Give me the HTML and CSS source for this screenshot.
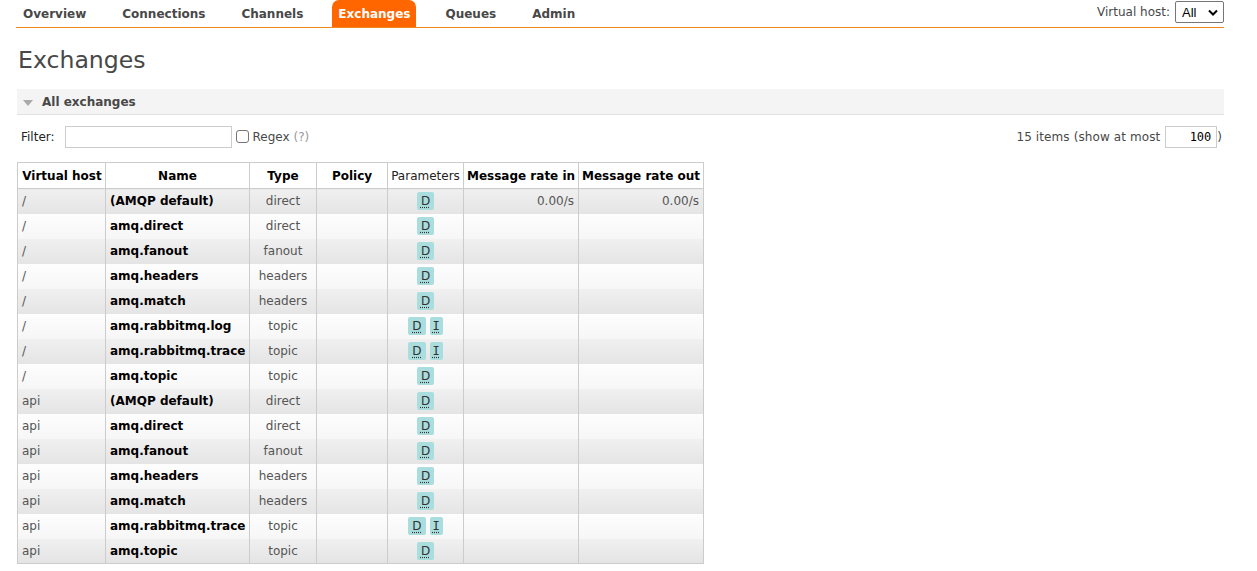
FILE: index.html
```html
<!DOCTYPE html>
<html>
<head>
<meta charset="utf-8">
<link rel="stylesheet" href="styles.css">
</head>
<body>
<div class="menu">
  <ul class="tabs">
    <li><a>Overview</a></li>
    <li><a>Connections</a></li>
    <li><a>Channels</a></li>
    <li><a class="selected">Exchanges</a></li>
    <li><a>Queues</a></li>
    <li><a>Admin</a></li>
  </ul>
  <div class="vhost">Virtual host: <span class="select">All <svg width="10" height="7" viewBox="0 0 10 7"><path d="M1 1.5 L5 5.5 L9 1.5" fill="none" stroke="#000" stroke-width="2"/></svg></span></div>
</div>
<div class="main">
  <h1>Exchanges</h1>
  <div class="section">
    <div class="section-head"><span class="tri"></span>All exchanges</div>
    <div class="filter-row">
      <div class="filter-left">
        <span>Filter:</span>
        <span class="input wide"></span>
        <span class="checkbox"></span>
        <span>Regex <span class="help">(?)</span></span>
      </div>
      <div class="filter-right">
        <span>15 items (show at most</span>
        <span class="input num">100</span><span>)</span>
      </div>
    </div>
    <table class="list">
      <thead>
        <tr><th>Virtual host</th><th>Name</th><th>Type</th><th>Policy</th><th class="plain">Parameters</th><th>Message rate in</th><th>Message rate out</th></tr>
      </thead>
      <tbody>
        <tr class="alt1"><td>/</td><td class="name">(AMQP default)</td><td class="c">direct</td><td></td><td class="c"><abbr>D</abbr></td><td class="r">0.00/s</td><td class="r">0.00/s</td></tr>
        <tr class="alt2"><td>/</td><td class="name">amq.direct</td><td class="c">direct</td><td></td><td class="c"><abbr>D</abbr></td><td></td><td></td></tr>
        <tr class="alt1"><td>/</td><td class="name">amq.fanout</td><td class="c">fanout</td><td></td><td class="c"><abbr>D</abbr></td><td></td><td></td></tr>
        <tr class="alt2"><td>/</td><td class="name">amq.headers</td><td class="c">headers</td><td></td><td class="c"><abbr>D</abbr></td><td></td><td></td></tr>
        <tr class="alt1"><td>/</td><td class="name">amq.match</td><td class="c">headers</td><td></td><td class="c"><abbr>D</abbr></td><td></td><td></td></tr>
        <tr class="alt2"><td>/</td><td class="name">amq.rabbitmq.log</td><td class="c">topic</td><td></td><td class="c"><abbr>D</abbr><abbr class="i">I</abbr></td><td></td><td></td></tr>
        <tr class="alt1"><td>/</td><td class="name">amq.rabbitmq.trace</td><td class="c">topic</td><td></td><td class="c"><abbr>D</abbr><abbr class="i">I</abbr></td><td></td><td></td></tr>
        <tr class="alt2"><td>/</td><td class="name">amq.topic</td><td class="c">topic</td><td></td><td class="c"><abbr>D</abbr></td><td></td><td></td></tr>
        <tr class="alt1"><td>api</td><td class="name">(AMQP default)</td><td class="c">direct</td><td></td><td class="c"><abbr>D</abbr></td><td></td><td></td></tr>
        <tr class="alt2"><td>api</td><td class="name">amq.direct</td><td class="c">direct</td><td></td><td class="c"><abbr>D</abbr></td><td></td><td></td></tr>
        <tr class="alt1"><td>api</td><td class="name">amq.fanout</td><td class="c">fanout</td><td></td><td class="c"><abbr>D</abbr></td><td></td><td></td></tr>
        <tr class="alt2"><td>api</td><td class="name">amq.headers</td><td class="c">headers</td><td></td><td class="c"><abbr>D</abbr></td><td></td><td></td></tr>
        <tr class="alt1"><td>api</td><td class="name">amq.match</td><td class="c">headers</td><td></td><td class="c"><abbr>D</abbr></td><td></td><td></td></tr>
        <tr class="alt2"><td>api</td><td class="name">amq.rabbitmq.trace</td><td class="c">topic</td><td></td><td class="c"><abbr>D</abbr><abbr class="i">I</abbr></td><td></td><td></td></tr>
        <tr class="alt1"><td>api</td><td class="name">amq.topic</td><td class="c">topic</td><td></td><td class="c"><abbr>D</abbr></td><td></td><td></td></tr>
      </tbody>
    </table>
  </div>
</div>
</body>
</html>
```

FILE: styles.css
```css
html, body {
  margin: 0;
  padding: 0;
  background: #fff;
}
body {
  font-family: "DejaVu Sans", Verdana, sans-serif;
  font-size: 12px;
  color: #484848;
}
.menu {
  display: flex;
  justify-content: space-between;
  align-items: center;
  margin: 0 33px 0 16px;
  border-bottom: 1px solid #f0881d;
  height: 27px;
}
.tabs {
  display: flex;
  list-style: none;
  margin: 0;
  padding: 0;
  gap: 22px;
  align-self: stretch;
}
.tabs li a {
  display: flex;
  align-items: center;
  height: 27px;
  padding: 0 7px;
  font-weight: bold;
  font-size: 12px;
  color: #484848;
  box-sizing: border-box;
}
.tabs li a.selected {
  background: #ff6600;
  color: #fff;
  border-radius: 7px 7px 0 0;
  padding: 0 6px;
}
.vhost {
  display: flex;
  align-items: center;
  gap: 5px;
  font-size: 12px;
  color: #484848;
  margin-bottom: 3px;
}
.select {
  display: inline-flex;
  align-items: center;
  justify-content: space-between;
  width: 36px;
  height: 20px;
  padding: 0 5px 0 6px;
  border: 1px solid #767676;
  border-radius: 2px;
  color: #000;
  font-family: "Liberation Sans", Arial, sans-serif;
  font-size: 13px;
}
.main {
  margin: 0 33px 0 17px;
}
h1 {
  font-size: 23.6px;
  font-weight: normal;
  margin: 18px 0 0 1px;
  height: 43px;
  line-height: 28px;
  color: #484848;
}
.section-head {
  display: flex;
  align-items: center;
  height: 24px;
  padding-top: 1px;
  background: #f4f4f4;
  border-bottom: 1px solid #e2e2e2;
  font-weight: bold;
  font-size: 12px;
  padding-left: 6px;
  color: #484848;
}
.tri {
  width: 0;
  height: 0;
  border-left: 5px solid transparent;
  border-right: 5px solid transparent;
  border-top: 6px solid #aaa;
  margin-right: 9px;
  margin-top: 1px;
}
.filter-row {
  display: flex;
  justify-content: space-between;
  align-items: center;
  margin-top: 10px;
  height: 23px;
}
.filter-left, .filter-right {
  display: flex;
  align-items: center;
}
.filter-left > span:first-child {
  margin-left: 4px;
  margin-right: 10px;
  color: #222;
}
.input {
  display: inline-block;
  height: 22px;
  border: 1px solid #ccc;
  box-sizing: border-box;
  background: #fff;
}
.wide {
  width: 167px;
  margin-right: 4px;
}
.checkbox {
  width: 11px;
  height: 11px;
  border: 1px solid #767676;
  border-radius: 3px;
  margin-right: 4px;
}
.help {
  color: #999;
}
.filter-right {
  margin-right: 2px;
}
.filter-right > span:first-child {
  margin-right: 5px;
  letter-spacing: 0.1px;
}
.num {
  width: 52px;
  text-align: right;
  font-family: "DejaVu Sans Mono", monospace;
  font-size: 12px;
  color: #000;
  padding: 3px 5px 0 0;
}
.list {
  border-collapse: collapse;
  table-layout: fixed;
  width: 687px;
  margin-top: 14px;
  border: 1px solid #ccc;
}
.list th {
  font-weight: bold;
  color: #000;
  height: 26px;
  padding: 0 3px;
  border: 1px solid #ccc;
  text-align: center;
  white-space: nowrap;
  background: #fff;
  box-sizing: border-box;
}
.list th:first-child {
  padding-left: 4px;
}
.list th.plain {
  font-weight: normal;
  color: #222;
}
.list td {
  height: 25px;
  padding: 0 4px;
  border-left: 1px solid #ccc;
  border-right: 1px solid #ccc;
  white-space: nowrap;
  box-sizing: border-box;
  color: #555;
}
.list tr.alt1 td {
  background: linear-gradient(#f0f0f0, #e4e4e4);
}
.list tr.alt2 td {
  background: linear-gradient(#fdfdfd, #f6f6f6);
}
.list td.name {
  font-weight: bold;
  color: #000;
}
.list td.c {
  text-align: center;
}
.list td.r {
  text-align: right;
}
.list th:nth-child(1) { width: 88px; }
.list th:nth-child(2) { width: 144px; }
.list th:nth-child(3) { width: 67px; }
.list th:nth-child(4) { width: 71px; }
.list th:nth-child(5) { width: 76px; }
.list th:nth-child(6) { width: 115px; }
.list th:nth-child(7) { width: 125px; }
abbr {
  display: inline-block;
  background: #aadddd;
  color: #333;
  border-radius: 2px;
  text-decoration: underline dotted;
  text-underline-offset: 2px;
  padding: 2px 4px 1px;
  line-height: 15px;
  font-size: 12px;
  margin: 0 2px;
  vertical-align: middle;
}
abbr.i {
  font-family: "DejaVu Sans Mono", monospace;
  padding: 2px 3px 1px;
}
```
